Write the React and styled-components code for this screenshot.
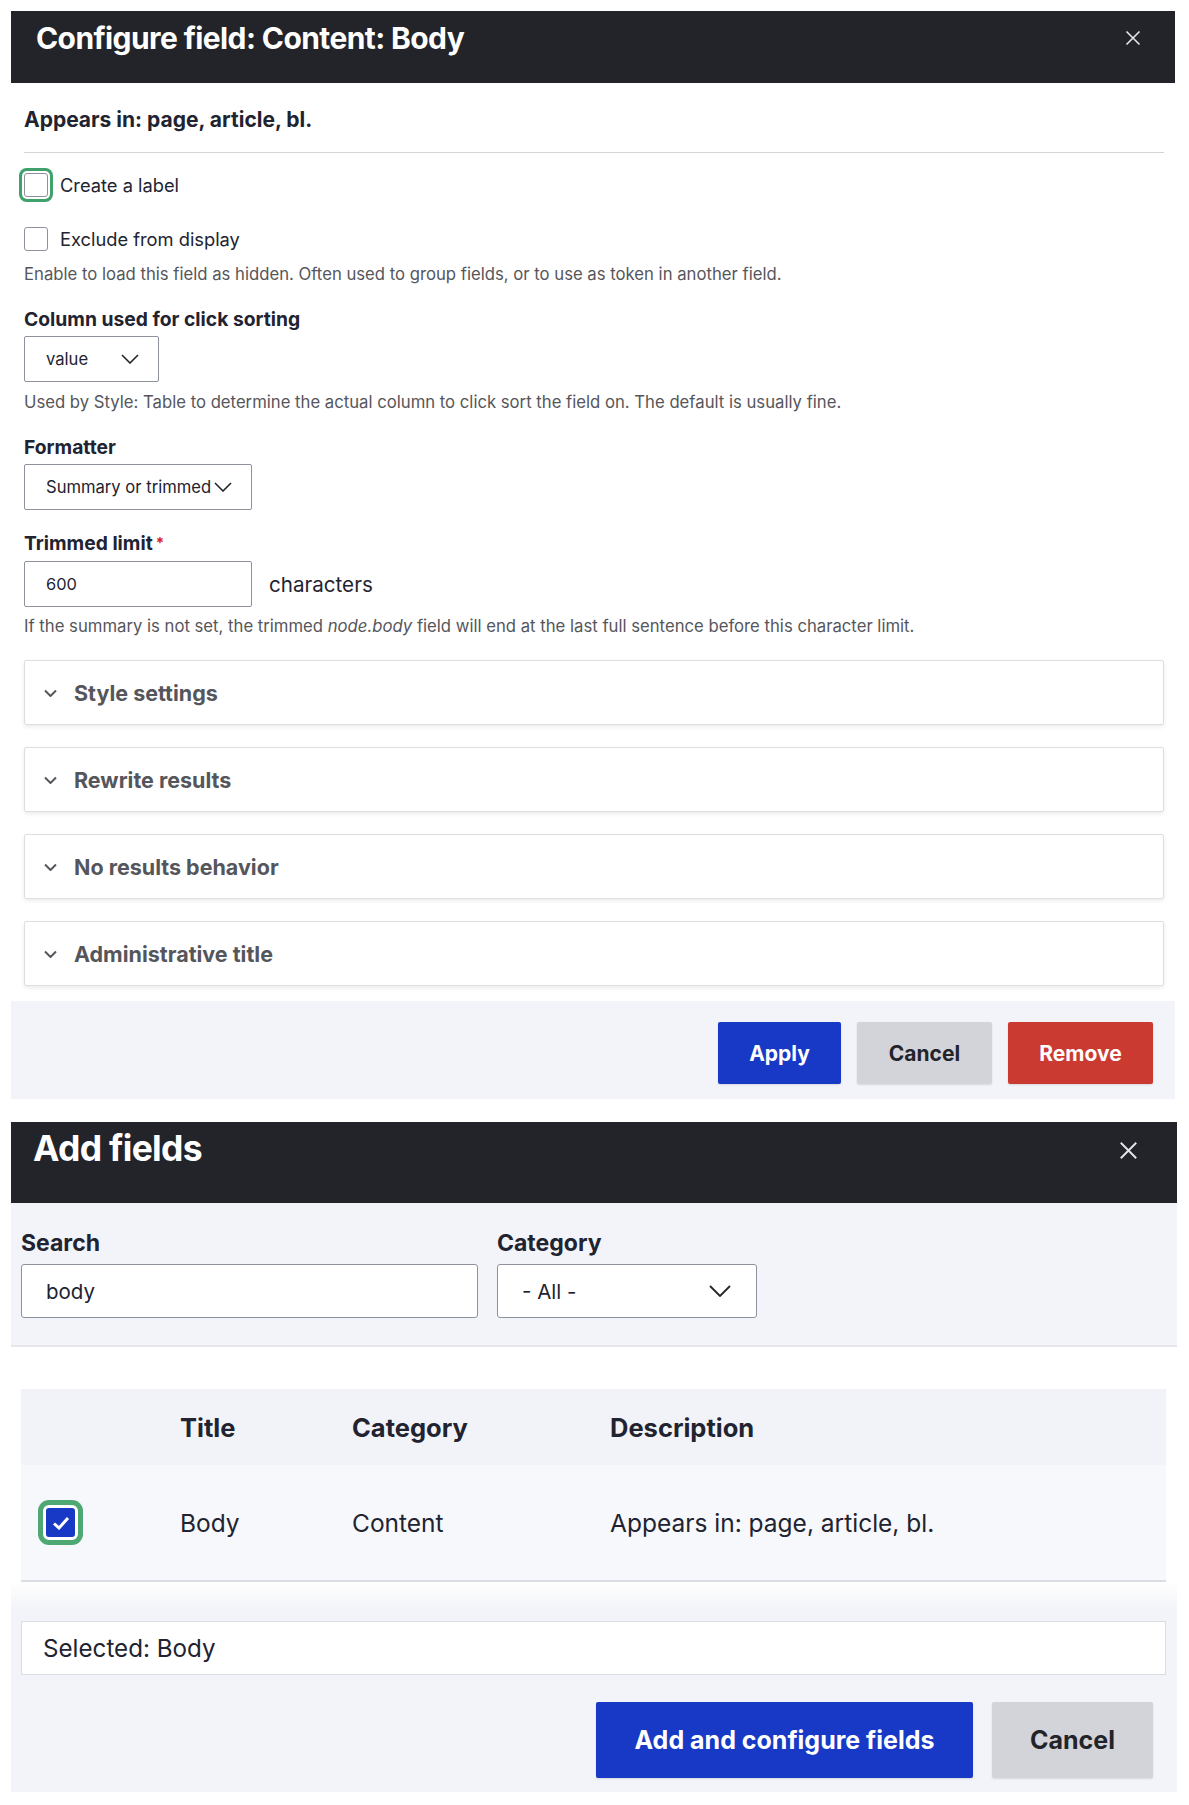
import React from 'react';
import styled, { createGlobalStyle } from 'styled-components';

const Global = createGlobalStyle`
  html, body { margin: 0; padding: 0; background: #fff; }
  body {
    font-family: Inter, "Noto Sans", sans-serif;
    color: #222330;
  }
  * { box-sizing: border-box; }
`;

const Page = styled.div`
  width: 1189px;
  padding: 11px 0 13px 11px;
  display: flex;
  flex-direction: column;
  gap: 23px;
`;

const Dialog = styled.section`
  width: ${(p) => p.$w}px;
  display: flex;
  flex-direction: column;
  background: #fff;
`;

const Header = styled.header`
  height: ${(p) => p.$h}px;
  background: #232429;
  color: #fff;
  display: flex;
  align-items: flex-start;
  justify-content: space-between;
  padding: ${(p) => p.$pad};
`;

const Title = styled.h1`
  margin: 0;
  font-size: ${(p) => p.$size}px;
  line-height: ${(p) => p.$lh}px;
  font-weight: 700;
  letter-spacing: -0.02em;
`;

const CloseBtn = styled.button`
  border: 0;
  background: none;
  padding: 0;
  color: #e6e6ea;
  height: ${(p) => p.$h}px;
  display: flex;
  align-items: center;
`;

const Body = styled.div`
  padding: 0 11px 0 13px;
  display: flex;
  flex-direction: column;
`;

const Appears = styled.div`
  margin-top: 25px;
  font-size: 21px;
  line-height: 24px;
  font-weight: 700;
`;

const Rule = styled.hr`
  margin: 20px 0 0;
  border: 0;
  border-top: 1px solid #d4d4d8;
`;

const CheckRow = styled.label`
  margin-top: ${(p) => p.$mt}px;
  height: 32px;
  display: flex;
  align-items: center;
  gap: 12px;
  font-size: 18.3px;
`;

const Box = styled.span`
  width: 24px;
  height: 24px;
  border: 1px solid #8e929c;
  border-radius: 3px;
  background: #fff;
  flex: none;
  ${(p) => p.$focus && `box-shadow: 0 0 0 2px #fff, 0 0 0 5px #3fa26c;`}
`;

const Description = styled.div`
  margin-top: ${(p) => p.$mt}px;
  font-size: 16.7px;
  line-height: 20px;
  color: #55565b;
  white-space: nowrap;
  em { font-style: italic; }
`;

const Label = styled.div`
  margin-top: ${(p) => p.$mt}px;
  font-size: 19.3px;
  line-height: 24px;
  font-weight: 700;
  display: flex;
  gap: 3px;
`;

const Req = styled.span`
  color: #d72222;
  font-size: 15px;
`;

const SelectBox = styled.div`
  margin-top: ${(p) => p.$mt}px;
  width: ${(p) => p.$w}px;
  height: 46px;
  border: 1px solid #8e929c;
  border-radius: 2px;
  display: flex;
  align-items: center;
  justify-content: space-between;
  gap: 2px;
  padding: 0 19px 0 21px;
  font-size: 16.6px;
  white-space: nowrap;
  background: #fff;
`;

const InputRow = styled.div`
  margin-top: 6px;
  display: flex;
  align-items: center;
  gap: 17px;
`;

const TextInput = styled.div`
  width: 228px;
  height: 46px;
  border: 1px solid #8e929c;
  border-radius: 2px;
  display: flex;
  align-items: center;
  padding: 0 21px;
  font-size: 16.4px;
`;

const Suffix = styled.span`
  font-size: 20.6px;
`;

const DetailsList = styled.div`
  margin-top: 24px;
  display: flex;
  flex-direction: column;
  gap: 22px;
`;

const Details = styled.div`
  height: 65px;
  border: 1px solid #dedee2;
  border-radius: 2px;
  box-shadow: 0 2px 4px rgba(0, 0, 0, 0.08);
  display: flex;
  align-items: center;
  padding-left: 19px;
  gap: 17px;
  font-size: 21.5px;
  font-weight: 700;
  color: #55565b;
`;

const Footer1 = styled.div`
  margin-top: 15px;
  height: 98px;
  background: #f3f4f9;
  display: flex;
  justify-content: flex-end;
  align-items: flex-start;
  padding: 21px 22px 0 0;
  gap: 16px;
`;

const Button = styled.button`
  height: ${(p) => p.$h}px;
  width: ${(p) => p.$w}px;
  border: 0;
  border-radius: 2px;
  font-family: inherit;
  font-weight: 700;
  font-size: ${(p) => p.$fs}px;
  color: ${(p) => (p.$kind === 'secondary' ? '#232429' : '#fff')};
  background: ${(p) =>
    p.$kind === 'primary' ? '#1739c6' : p.$kind === 'danger' ? '#cb3a31' : '#d3d4d9'};
  box-shadow: 0 1px 2px rgba(0, 0, 0, 0.12);
`;

const Filters = styled.div`
  height: 144px;
  background: #f3f4f9;
  border-bottom: 2px solid #e6e7ec;
  display: flex;
  gap: 19px;
  padding: 26px 0 0 10px;
`;

const Field = styled.div`
  display: flex;
  flex-direction: column;
  gap: 7px;
`;

const FieldLabel = styled.div`
  font-size: 23px;
  line-height: 28px;
  font-weight: 700;
`;

const BigInput = styled.div`
  width: ${(p) => p.$w}px;
  height: 54px;
  border: 1px solid #8e929c;
  border-radius: 3px;
  background: #fff;
  display: flex;
  align-items: center;
  justify-content: space-between;
  padding: 0 25px 0 24px;
  font-size: 20.5px;
`;

const Table = styled.div`
  margin: 42px 11px 0 10px;
  display: flex;
  flex-direction: column;
`;

const Row = styled.div`
  display: grid;
  grid-template-columns: 159px 172px 258px 1fr;
  align-items: center;
  height: ${(p) => p.$h}px;
  background: ${(p) => p.$bg};
  font-size: ${(p) => (p.$head ? 25.5 : 24.5)}px;
  font-weight: ${(p) => (p.$head ? 700 : 400)};
  border-bottom: ${(p) => (p.$head ? '0' : '2px solid #dcdde2')};
`;

const CheckCell = styled.div`
  padding-left: 22px;
  display: flex;
  align-items: center;
`;

const BigCheck = styled.span`
  width: 35px;
  height: 35px;
  border-radius: 6px;
  background: #1739c6;
  border: 3px solid #fff;
  box-shadow: 0 0 0 5px #4ea874;
  display: flex;
  align-items: center;
  justify-content: center;
`;

const Footer2 = styled.div`
  background: linear-gradient(#ffffff, #f3f4f9 28px);
  padding: 39px 11px 14px 10px;
  display: flex;
  flex-direction: column;
`;

const Selected = styled.div`
  height: 54px;
  border: 1px solid #dcdde2;
  background: #fff;
  display: flex;
  align-items: center;
  padding-left: 21px;
  font-size: 24.2px;
`;

const Actions = styled.div`
  margin-top: 27px;
  display: flex;
  justify-content: flex-end;
  gap: 19px;
  padding-right: 13px;
`;

const Chevron = ({ w = 18, h = 10, sw = 1.6 }) => (
  <svg width={w} height={h} viewBox={`0 0 ${w} ${h}`} fill="none" style={{ flex: 'none' }}>
    <path d={`M1 1 L${w / 2} ${h - 1} L${w - 1} 1`} stroke="#232429" strokeWidth={sw} />
  </svg>
);

const Close = ({ s }) => (
  <svg width={s} height={s} viewBox="0 0 16 16" fill="none">
    <path d="M1.5 1.5 L14.5 14.5 M14.5 1.5 L1.5 14.5" stroke="currentColor" strokeWidth="1.6" />
  </svg>
);

const SmallChevron = () => (
  <svg width="13" height="8" viewBox="0 0 13 8" fill="none" style={{ flex: 'none' }}>
    <path d="M1 1.5 L6.5 7 L12 1.5" stroke="#55565b" strokeWidth="2" />
  </svg>
);

const details = ['Style settings', 'Rewrite results', 'No results behavior', 'Administrative title'];

export default function App() {
  return (
    <>
      <Global />
      <Page>
        <Dialog $w={1164}>
          <Header $h={72} $pad="9px 34px 0 25px">
            <Title $size={30} $lh={36}>Configure field: Content: Body</Title>
            <CloseBtn $h={36}><Close s={16} /></CloseBtn>
          </Header>
          <Body>
            <Appears>Appears in: page, article, bl.</Appears>
            <Rule />
            <CheckRow $mt={16}><Box $focus />Create a label</CheckRow>
            <CheckRow $mt={22}><Box />Exclude from display</CheckRow>
            <Description $mt={9}>
              Enable to load this field as hidden. Often used to group fields, or to use as token in another field.
            </Description>
            <Label $mt={23}>Column used for click sorting</Label>
            <SelectBox $mt={5} $w={135}>value<Chevron /></SelectBox>
            <Description $mt={10}>
              Used by Style: Table to determine the actual column to click sort the field on. The default is usually fine.
            </Description>
            <Label $mt={23}>Formatter</Label>
            <SelectBox $mt={5} $w={228}>Summary or trimmed<Chevron /></SelectBox>
            <Label $mt={21}>Trimmed limit<Req>*</Req></Label>
            <InputRow>
              <TextInput>600</TextInput>
              <Suffix>characters</Suffix>
            </InputRow>
            <Description $mt={9}>
              If the summary is not set, the trimmed <em>node.body</em> field will end at the last full sentence before this character limit.
            </Description>
            <DetailsList>
              {details.map((d) => (
                <Details key={d}><SmallChevron />{d}</Details>
              ))}
            </DetailsList>
          </Body>
          <Footer1>
            <Button $kind="primary" $h={62} $w={123} $fs={21}>Apply</Button>
            <Button $kind="secondary" $h={62} $w={135} $fs={21}>Cancel</Button>
            <Button $kind="danger" $h={62} $w={145} $fs={21}>Remove</Button>
          </Footer1>
        </Dialog>

        <Dialog $w={1166}>
          <Header $h={81} $pad="6px 39px 0 22px">
            <Title $size={35.5} $lh={42}>Add fields</Title>
            <CloseBtn $h={44}><Close s={19} /></CloseBtn>
          </Header>
          <Filters>
            <Field>
              <FieldLabel>Search</FieldLabel>
              <BigInput $w={457}>body</BigInput>
            </Field>
            <Field>
              <FieldLabel>Category</FieldLabel>
              <BigInput $w={260}>- All -<Chevron w={22} h={12} sw={1.8} /></BigInput>
            </Field>
          </Filters>
          <Table>
            <Row $h={76} $bg="#f2f3f8" $head>
              <span />
              <span>Title</span>
              <span>Category</span>
              <span>Description</span>
            </Row>
            <Row $h={117} $bg="#f7f8fc">
              <CheckCell>
                <BigCheck>
                  <svg width="18" height="14" viewBox="0 0 18 14" fill="none">
                    <path d="M2 7.5 L7 12 L16 2" stroke="#fff" strokeWidth="3" />
                  </svg>
                </BigCheck>
              </CheckCell>
              <span>Body</span>
              <span>Content</span>
              <span>Appears in: page, article, bl.</span>
            </Row>
          </Table>
          <Footer2>
            <Selected>Selected: Body</Selected>
            <Actions>
              <Button $kind="primary" $h={76} $w={377} $fs={25}>Add and configure fields</Button>
              <Button $kind="secondary" $h={76} $w={161} $fs={25}>Cancel</Button>
            </Actions>
          </Footer2>
        </Dialog>
      </Page>
    </>
  );
}
